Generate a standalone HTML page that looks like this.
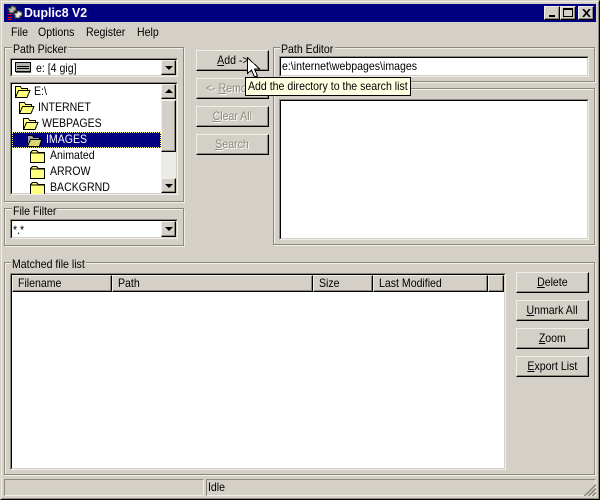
<!DOCTYPE html>
<html><head><meta charset="utf-8"><title>Duplic8 V2</title>
<style>
html,body{margin:0;padding:0;background:#d4d0c8}
#w{position:relative;width:600px;height:500px;overflow:hidden;background:#d4d0c8;font:12px/14px "Liberation Sans",sans-serif;color:#000}
#w div,#w svg{position:absolute;box-sizing:border-box}
.t{white-space:nowrap;transform:scaleX(.88);transform-origin:0 50%}
.g{border:1px solid #8c8a7c;box-shadow:inset 1px 1px 0 #efeee9,1px 1px 0 #efeee9}
.l{background:#d4d0c8;white-space:nowrap;height:14px}
.l span,.h span{display:inline-block;transform:scaleX(.88);transform-origin:0 50%}
.s{background:#fff;border:1px solid;border-color:#8c8a7c #efeee9 #efeee9 #8c8a7c}
.s>.i{left:0;top:0;right:0;bottom:0;border:1px solid;border-color:#000 #d4d0c8 #d4d0c8 #000}
.b{background:#d4d0c8;border:1px solid;border-color:#efeee9 #000 #000 #efeee9;box-shadow:inset -1px -1px 0 #8c8a7c;text-align:center;line-height:19px;white-space:nowrap}
.b span{display:inline-block;transform:scaleX(.88)}
.d{color:#8c8a7c;text-shadow:1px 1px 0 #fff}
.h{top:0;height:17px;background:#d4d0c8;border:1px solid;border-color:#efeee9 #000 #000 #efeee9;box-shadow:inset -1px -1px 0 #8c8a7c;padding-left:5px;line-height:15px;white-space:nowrap}
.ar{width:0;height:0;border:4px solid transparent;border-bottom:0;border-top-color:#000}
.up{border:4px solid transparent;border-top:0;border-bottom-color:#000;width:0;height:0}
</style></head><body>
<div id="w">

<!-- window frame -->
<div style="left:0;top:0;width:600px;height:500px;border:1px solid;border-color:#d4d0c8 #000 #000 #d4d0c8"></div>
<div style="left:1px;top:1px;width:598px;height:498px;border:1px solid;border-color:#efeee9 #8c8a7c #8c8a7c #efeee9"></div>

<!-- title bar -->
<div style="left:4px;top:4px;width:592px;height:18px;background:#000080"></div>
<svg style="left:5px;top:5px" width="18" height="16" viewBox="0 0 18 16" shape-rendering="crispEdges">
<path d="M6 1h3v1h2v4H9v2H4V5H3V3h3z" fill="#b8b8a8" stroke="#333" stroke-width="1"/>
<path d="M12 6h3v1h2v4h-2v2h-5v-3H9V8h3z" fill="#e8e8d8" stroke="#333" stroke-width="1"/>
<rect x="3" y="9" width="4" height="1" fill="#ff0000"/><rect x="3" y="12" width="4" height="1" fill="#ff0000"/><rect x="3" y="14" width="4" height="1" fill="#ff0000"/>
</svg>
<div class="t" style="left:24px;top:5px;color:#fff;font:bold 13px/16px 'Liberation Sans',sans-serif;transform:scaleX(.95)">Duplic8 V2</div>
<div class="b" style="left:544px;top:6px;width:16px;height:14px"><div style="left:4px;top:8px;width:6px;height:2px;background:#000"></div></div>
<div class="b" style="left:560px;top:6px;width:16px;height:14px"><div style="left:2px;top:1px;width:10px;height:9px;border:1px solid #000;border-top-width:2px"></div></div>
<div class="b" style="left:578px;top:6px;width:16px;height:14px"><svg style="left:3px;top:2px" width="9" height="8" viewBox="0 0 9 8"><path d="M1 0L8 8M8 0L1 8" stroke="#000" stroke-width="1.7"/></svg></div>

<!-- menu -->
<div class="t" style="left:11px;top:25px">File</div>
<div class="t" style="left:38px;top:25px">Options</div>
<div class="t" style="left:86px;top:25px">Register</div>
<div class="t" style="left:137px;top:25px">Help</div>

<!-- Path Picker -->
<div class="g" style="left:4px;top:47px;width:180px;height:155px"></div>
<div class="l" style="left:12px;top:42px;width:56px;padding-left:1px"><span>Path Picker</span></div>
<div class="s" style="left:10px;top:58px;width:168px;height:19px"><div class="i"></div></div>
<svg style="left:15px;top:62px" width="16" height="11" viewBox="0 0 16 11" shape-rendering="crispEdges"><rect x=".5" y=".5" width="15" height="9" fill="#b4b4ac" stroke="#000"/><rect x="2" y="4" width="12" height="1" fill="#000"/><rect x="2" y="6" width="12" height="1" fill="#000"/><rect x="1" y="10" width="15" height="1" fill="#666"/></svg>
<div class="t" style="left:36px;top:61px">e: [4 gig]</div>
<div class="b" style="left:161px;top:60px;width:15px;height:15px"><div class="ar" style="left:3px;top:5px"></div></div>

<div class="s" style="left:10px;top:82px;width:168px;height:113px"><div class="i"></div></div>
<!-- scrollbar -->
<div style="left:161px;top:84px;width:15px;height:109px;background:#eceae5"></div>
<div class="b" style="left:161px;top:84px;width:15px;height:15px"><div class="up" style="left:3px;top:4px"></div></div>
<div class="b" style="left:161px;top:100px;width:15px;height:52px"></div>
<div class="b" style="left:161px;top:178px;width:15px;height:15px"><div class="ar" style="left:3px;top:5px"></div></div>

<!-- tree -->
<svg style="left:14px;top:85px" width="17" height="13" viewBox="0 0 17 13" shape-rendering="crispEdges"><path d="M1.500 12.500V1.500h5l1 2h6v2h2.500l-3 7z" fill="#ffff80" stroke="#000"/><path d="M1.500 12.500l3-7h11.500" fill="none" stroke="#000"/></svg>
<div class="t" style="left:34px;top:84px">E:\</div>
<svg style="left:18px;top:101px" width="17" height="13" viewBox="0 0 17 13" shape-rendering="crispEdges"><path d="M1.500 12.500V1.500h5l1 2h6v2h2.500l-3 7z" fill="#ffff80" stroke="#000"/><path d="M1.500 12.500l3-7h11.500" fill="none" stroke="#000"/></svg>
<div class="t" style="left:38px;top:100px">INTERNET</div>
<svg style="left:22px;top:117px" width="17" height="13" viewBox="0 0 17 13" shape-rendering="crispEdges"><path d="M1.500 12.500V1.500h5l1 2h6v2h2.500l-3 7z" fill="#ffff80" stroke="#000"/><path d="M1.500 12.500l3-7h11.500" fill="none" stroke="#000"/></svg>
<div class="t" style="left:42px;top:116px">WEBPAGES</div>
<div style="left:12px;top:132px;width:149px;height:16px;background:#000080;outline:1px dotted #ffff66;outline-offset:-1px"></div>
<svg style="left:26px;top:134px" width="17" height="13" viewBox="0 0 17 13" shape-rendering="crispEdges"><path d="M1.500 12.500V1.500h5l1 2h6v2h2.500l-3 7z" fill="#a0a0a0" stroke="#000"/><path d="M3 6h12l-2 6H2z" fill="#d8d870"/><path d="M1.500 12.500l3-7h11.500" fill="none" stroke="#000"/></svg>
<div class="t" style="left:46px;top:132px;color:#fff">IMAGES</div>
<svg style="left:30px;top:150px" width="15" height="13" viewBox="0 0 15 13" shape-rendering="crispEdges"><path d="M.5 12.500V2.500l2-2h4l2 2h6v10z" fill="#ffff80" stroke="#000"/><path d="M1 3h13" stroke="#000"/></svg>
<div class="t" style="left:50px;top:148px">Animated</div>
<svg style="left:30px;top:166px" width="15" height="13" viewBox="0 0 15 13" shape-rendering="crispEdges"><path d="M.5 12.500V2.500l2-2h4l2 2h6v10z" fill="#ffff80" stroke="#000"/><path d="M1 3h13" stroke="#000"/></svg>
<div class="t" style="left:50px;top:164px">ARROW</div>
<svg style="left:30px;top:182px" width="15" height="12" viewBox="0 0 15 12" shape-rendering="crispEdges"><path d="M.5 12.500V2.500l2-2h4l2 2h6v10z" fill="#ffff80" stroke="#000"/><path d="M1 3h13" stroke="#000"/></svg>
<div class="t" style="left:50px;top:180px">BACKGRND</div>

<!-- File Filter -->
<div class="g" style="left:4px;top:208px;width:180px;height:38px"></div>
<div class="l" style="left:12px;top:204px;width:43px;padding-left:1px"><span>File Filter</span></div>
<div class="s" style="left:10px;top:219px;width:168px;height:20px"><div class="i"></div></div>
<div class="t" style="left:13px;top:223px">*.*</div>
<div class="b" style="left:161px;top:221px;width:15px;height:16px"><div class="ar" style="left:3px;top:5px"></div></div>

<!-- Action buttons -->
<div class="b" style="left:196px;top:50px;width:73px;height:21px"><span><u>A</u>dd -&gt;</span></div>
<div class="b d" style="left:196px;top:78px;width:73px;height:21px;text-align:left;padding-left:9px"><span style="transform-origin:0 50%">&lt;- <u>R</u>emove</span></div>
<div class="b d" style="left:196px;top:106px;width:73px;height:21px"><span><u>C</u>lear All</span></div>
<div class="b d" style="left:196px;top:134px;width:73px;height:21px"><span><u>S</u>earch</span></div>

<!-- Path Editor -->
<div class="g" style="left:273px;top:47px;width:322px;height:35px"></div>
<div class="l" style="left:280px;top:42px;width:55px;padding-left:1px"><span>Path Editor</span></div>
<div class="s" style="left:279px;top:56px;width:310px;height:21px"><div class="i"></div></div>
<div class="t" style="left:282px;top:59px">e:\internet\webpages\images</div>

<!-- Search list -->
<div class="g" style="left:273px;top:88px;width:322px;height:157px"></div>
<div class="s" style="left:279px;top:99px;width:310px;height:141px"><div class="i"></div></div>

<!-- Matched list -->
<div class="g" style="left:4px;top:262px;width:591px;height:213px"></div>
<div class="l" style="left:11px;top:257px;width:75px;padding-left:1px"><span>Matched file list</span></div>
<div class="s" style="left:10px;top:273px;width:496px;height:197px"><div class="i"></div>
<div style="left:2px;top:1px;width:492px;height:17px;background:#d4d0c8"></div>
</div>
<div class="h" style="left:12px;top:275px;width:100px"><span>Filename</span></div>
<div class="h" style="left:112px;top:275px;width:201px"><span>Path</span></div>
<div class="h" style="left:313px;top:275px;width:60px"><span>Size</span></div>
<div class="h" style="left:373px;top:275px;width:115px"><span>Last Modified</span></div>
<div class="h" style="left:488px;top:275px;width:16px"></div>

<div class="b" style="left:516px;top:272px;width:73px;height:21px"><span><u>D</u>elete</span></div>
<div class="b" style="left:516px;top:300px;width:73px;height:21px"><span><u>U</u>nmark All</span></div>
<div class="b" style="left:516px;top:328px;width:73px;height:21px"><span><u>Z</u>oom</span></div>
<div class="b" style="left:516px;top:356px;width:73px;height:21px"><span><u>E</u>xport List</span></div>

<!-- Status -->
<div style="left:4px;top:479px;width:200px;height:17px;border:1px solid;border-color:#8c8a7c #efeee9 #efeee9 #8c8a7c"></div>
<div style="left:206px;top:479px;width:390px;height:17px;border:1px solid;border-color:#8c8a7c #efeee9 #efeee9 #8c8a7c"></div>
<div class="t" style="left:208px;top:480px">Idle</div>
<svg style="left:583px;top:483px" width="13" height="13" viewBox="0 0 13 13"><path d="M1 13L13 1M2 13L13 2M5 13L13 5M6 13L13 6M9 13L13 9M10 13L13 10" stroke="#8c8a7c" stroke-width=".8"/></svg>

<!-- Tooltip -->
<div style="left:245px;top:77px;width:166px;height:19px;background:#ffffe1;border:1px solid #000"></div>
<div class="t" style="left:248px;top:79px">Add the directory to the search list</div>

<!-- Cursor -->
<svg style="left:246px;top:57px" width="15" height="22" viewBox="0 0 15 22" shape-rendering="crispEdges"><path d="M1.500 .5v16l4-3.500 3 7 3-1-3-7h5z" fill="#fff" stroke="#000"/></svg>
</div>
</body></html>
